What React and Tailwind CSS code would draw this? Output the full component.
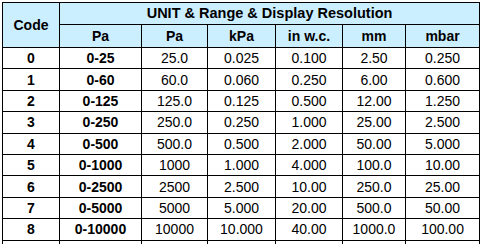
import React from 'react';

const rows = [
    ['0', '0-25', '25.0', '0.025', '0.100', '2.50', '0.250'],
    ['1', '0-60', '60.0', '0.060', '0.250', '6.00', '0.600'],
    ['2', '0-125', '125.0', '0.125', '0.500', '12.00', '1.250'],
    ['3', '0-250', '250.0', '0.250', '1.000', '25.00', '2.500'],
    ['4', '0-500', '500.0', '0.500', '2.000', '50.00', '5.000'],
    ['5', '0-1000', '1000', '1.000', '4.000', '100.0', '10.00'],
    ['6', '0-2500', '2500', '2.500', '10.00', '250.0', '25.00'],
    ['7', '0-5000', '5000', '5.000', '20.00', '500.0', '50.00'],
    ['8', '0-10000', '10000', '10.000', '40.00', '1000.0', '100.00'],
];

const units = ['Pa', 'Pa', 'kPa', 'in w.c.', 'mm', 'mbar'];

export default function App() {
    return (
        <div className="w-[484px] h-[244px] overflow-hidden bg-white pt-[2px] pl-[2px] font-['Liberation_Sans',Arial,sans-serif] text-[14px] leading-none text-black">
            <table className="border-collapse table-fixed w-[477px]">
                <colgroup>
                    <col className="w-[57px]" />
                    <col className="w-[82px]" />
                    <col className="w-[66px]" />
                    <col className="w-[68px]" />
                    <col className="w-[67px]" />
                    <col className="w-[63px]" />
                    <col className="w-[74px]" />
                </colgroup>
                <thead>
                    <tr className="h-[22px] bg-[#ccefff]">
                        <th rowSpan={2} className="border border-black font-bold text-center p-0">Code</th>
                        <th colSpan={6} className="border border-black font-bold text-center p-0 text-[14.5px]">
                            UNIT &amp; Range &amp; Display Resolution
                        </th>
                    </tr>
                    <tr className="h-[23px] bg-[#ccefff]">
                        {units.map((u, i) => (
                            <th key={i} className="border border-black font-bold text-center p-0">{u}</th>
                        ))}
                    </tr>
                </thead>
                <tbody>
                    {rows.map((r) => (
                        <tr key={r[0]} className="h-[21.4px]">
                            {r.map((c, i) => (
                                <td
                                    key={i}
                                    className={`border border-black text-center p-0 ${i < 2 ? 'font-bold' : ''}`}
                                >
                                    {c}
                                </td>
                            ))}
                        </tr>
                    ))}
                    <tr className="h-[21px]">
                        {[0, 1, 2, 3, 4, 5, 6].map((i) => (
                            <td key={i} className="border border-black p-0">&nbsp;</td>
                        ))}
                    </tr>
                </tbody>
            </table>
        </div>
    );
}
